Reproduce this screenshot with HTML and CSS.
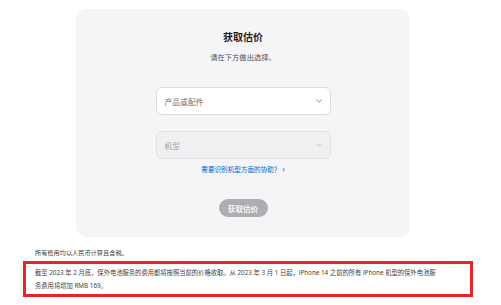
FILE: index.html
```html
<!doctype html>
<html lang="zh-CN">
  <head>
    <meta charset="UTF-8" />
    <meta name="viewport" content="width=device-width, initial-scale=1.0" />
    <title>获取估价</title>
    <link rel="stylesheet" href="styles.css">
  </head>
  <body>
    <div class="page">
      <div class="card">
        <h2 class="title">获取估价</h2>
        <p class="subtitle">请在下方做出选择。</p>

        <div class="select">
          <span>产品或配件</span>
          <svg class="chevron" width="6" height="4" viewBox="0 0 6 4"><path d="M0.5 0.8 L3 3.2 L5.5 0.8" fill="none" stroke="currentColor" stroke-width="0.9" stroke-linecap="round" stroke-linejoin="round"/></svg>
        </div>

        <div class="select disabled">
          <span>机型</span>
          <svg class="chevron" width="6" height="4" viewBox="0 0 6 4"><path d="M0.5 0.8 L3 3.2 L5.5 0.8" fill="none" stroke="currentColor" stroke-width="0.9" stroke-linecap="round" stroke-linejoin="round"/></svg>
        </div>

        <a class="help" href="#">需要识别机型方面的协助？ <span class="arrow">&rsaquo;</span></a>

        <button class="btn" disabled>获取估价</button>
      </div>

      <p class="note">所有费用均以人民币计算且含税。</p>

      <div class="notice">
        截至 2023 年 2 月底，保外电池服务的费用都将按照当前的价格收取。从 2023 年 3 月 1 日起，iPhone 14 之前的所有 iPhone 机型的保外电池服务费用将增加 RMB 169。
      </div>
    </div>
  </body>
</html>
```

FILE: styles.css
```css
body {
  margin: 0;
  background: #fff;
  font-family: "Noto Sans", "Noto Sans CJK SC", sans-serif;
  color: #1d1d1f;
}

.page {
  padding-top: 9px;
}

.card {
  margin-left: 76px;
  width: 334px;
  height: 228px;
  box-sizing: border-box;
  background: #f5f5f7;
  border-radius: 11px;
  display: flex;
  flex-direction: column;
  align-items: center;
  padding-top: 22px;
}

.title {
  margin: 0;
  font-size: 10px;
  line-height: 12px;
  font-weight: 600;
  color: #1d1d1f;
}

.subtitle {
  margin: 9px 0 0;
  font-size: 7.3px;
  line-height: 10px;
  color: #515154;
}

.select {
  margin-top: 25px;
  width: 175px;
  height: 28px;
  box-sizing: border-box;
  background: #fff;
  border: 1px solid #dcdce0;
  border-radius: 6px;
  display: flex;
  align-items: center;
  justify-content: space-between;
  padding: 0 8px;
  font-size: 7.8px;
  color: #6e6e73;
}

.select .chevron {
  color: #86868b;
}

.select.disabled {
  margin-top: 16px;
  background: #f0f0f2;
  border-color: #e3e3e6;
  color: #a1a1a6;
}

.select.disabled .chevron {
  color: #c2c2c7;
}

.help {
  margin-top: 5px;
  font-size: 6.6px;
  line-height: 9px;
  color: #0066cc;
  text-decoration: none;
}

.help .arrow {
  font-size: 8px;
}

.btn {
  margin-top: 25px;
  width: 49px;
  height: 18px;
  border: none;
  border-radius: 9px;
  background: #aeaeb2;
  color: #f5f5f7;
  font-family: inherit;
  font-size: 7.6px;
  font-weight: 600;
  padding: 0;
}

.note {
  margin: 11px 0 0 35px;
  font-size: 6.2px;
  line-height: 10px;
  color: #424245;
}

.notice {
  margin: 3px 0 0 23px;
  width: 450px;
  box-sizing: border-box;
  border: 3px solid #e8232a;
  padding: 2px 33px 2px 9px;
  font-size: 6.3px;
  line-height: 13px;
  color: #424245;
}
```
